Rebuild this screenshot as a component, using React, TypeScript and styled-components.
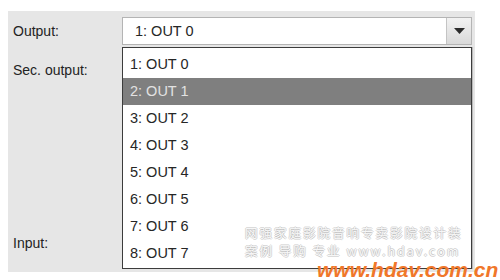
import React from 'react';
import styled, {createGlobalStyle} from "styled-components";

const Global = createGlobalStyle`
  html, body {
    margin: 0;
    background: #ffffff;
  }
  body {
    font-family: "Liberation Sans", Arial, sans-serif;
  }
`

const Page = styled.div`
  position: relative;
  width: 500px;
  height: 280px;
  padding: 11px 25px 8px 8px;
  box-sizing: border-box;
  overflow: hidden;
`

const Panel = styled.div`
  height: 261px;
  background: #e6e6e6;
  padding: 6px 3px 15px 5px;
  box-sizing: border-box;
  display: flex;
  flex-direction: column;
  gap: 11px;
`

const Row = styled.div<{ $bottom?: boolean }>`
  display: grid;
  grid-template-columns: 109px 350px;
  align-items: center;
  height: 28px;
  margin-top: ${p => p.$bottom ? 'auto' : '0'};
`

const Label = styled.span`
  font-size: 14px;
  color: #232323;
`

const SelectWrap = styled.div`
  position: relative;
  height: 28px;
`

const SelectBox = styled.div<{ $empty?: boolean }>`
  height: 28px;
  box-sizing: border-box;
  border: 1px solid #b4b4b4;
  background: #ffffff;
  display: flex;
  align-items: center;
  font-size: 14.5px;
  color: #262626;
  visibility: ${p => p.$empty ? 'hidden' : 'visible'};
`

const Value = styled.span`
  flex: 1;
  padding-left: 12px;
`

const ArrowBtn = styled.div`
  width: 24px;
  height: 100%;
  border-left: 1px solid #c4c4c4;
  background: linear-gradient(#f2f2f2, #d9d9d9);
  display: flex;
  align-items: center;
  justify-content: center;
`

const List = styled.ul`
  position: absolute;
  top: 30px;
  left: 0;
  width: 350px;
  margin: 0;
  padding: 3px 0 1px;
  list-style: none;
  box-sizing: border-box;
  background: #ffffff;
  border: 1px solid #3c3c3c;
  box-shadow: 1px 0 0 #b8b8b8, 2px 0 0 #e4e4e4;
  z-index: 2;
`

const Item = styled.li<{ $active?: boolean }>`
  height: 27px;
  line-height: 27px;
  padding-left: 7px;
  font-size: 14.5px;
  color: ${p => p.$active ? '#e2e2e2' : '#262626'};
  background: ${p => p.$active ? '#7f7f7f' : 'transparent'};
`

const Watermark = styled.div`
  position: absolute;
  left: 245px;
  top: 224px;
  z-index: 5;
  pointer-events: none;
  display: flex;
  flex-direction: column;
  gap: 0;
`

const WmLine = styled.div`
  font-family: "Noto Sans CJK SC", sans-serif;
  font-size: 12.5px;
  line-height: 18px;
  letter-spacing: 2px;
  color: rgba(255, 255, 255, 0.9);
  text-shadow: 1px 0 0 rgba(160,160,160,0.4), -1px 0 0 rgba(160,160,160,0.4), 0 1px 0 rgba(160,160,160,0.4), 0 -1px 0 rgba(160,160,160,0.4);
  white-space: nowrap;
`

const Site = styled.div`
  position: absolute;
  left: 317px;
  top: 258px;
  z-index: 5;
  font-family: "Liberation Sans", Arial, sans-serif;
  font-weight: bold;
  font-style: italic;
  font-size: 21px;
  color: #f0772a;
  white-space: nowrap;
`

const outputs = ['1: OUT 0', '2: OUT 1', '3: OUT 2', '4: OUT 3', '5: OUT 4', '6: OUT 5', '7: OUT 6', '8: OUT 7'];

const App = () => {
    return (
        <Page>
            <Global/>
            <Panel>
                <Row>
                    <Label>Output:</Label>
                    <SelectWrap>
                        <SelectBox>
                            <Value>1: OUT 0</Value>
                            <ArrowBtn>
                                <svg width="11" height="6" viewBox="0 0 11 6">
                                    <path d="M0 0 H11 L5.5 6 Z" fill="#2b2b2b"/>
                                </svg>
                            </ArrowBtn>
                        </SelectBox>
                        <List>
                            {outputs.map((o, i) => (
                                <Item key={o} $active={i === 1}>{o}</Item>
                            ))}
                        </List>
                    </SelectWrap>
                </Row>
                <Row>
                    <Label>Sec. output:</Label>
                    <SelectBox $empty/>
                </Row>
                <Row $bottom>
                    <Label>Input:</Label>
                    <SelectBox $empty/>
                </Row>
            </Panel>
            <Watermark>
                <WmLine>网强家庭影院音响专卖影院设计装</WmLine>
                <WmLine>案例 导购 专业 www.hdav.com</WmLine>
            </Watermark>
            <Site>www.hdav.com.cn</Site>
        </Page>
    );
};

export default App;
